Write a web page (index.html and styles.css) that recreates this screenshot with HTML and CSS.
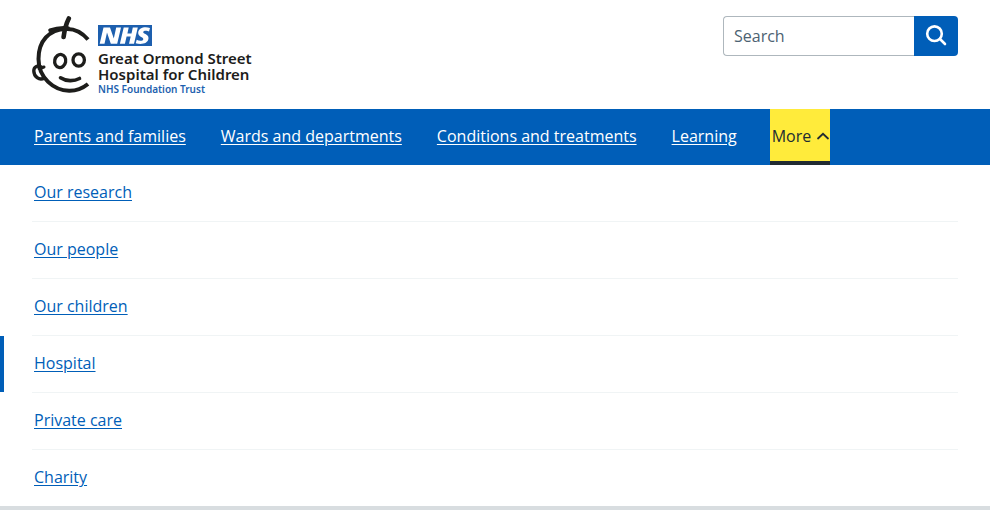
FILE: index.html
```html
<!DOCTYPE html>
<html lang="en">
<head>
<meta charset="utf-8">
<meta name="viewport" content="width=device-width, initial-scale=1">
<title>Great Ormond Street Hospital</title>
<link rel="stylesheet" href="styles.css">
</head>
<body>
<header class="header">
  <a class="logo" href="#">
    <svg class="logo-face" viewBox="0 0 60 78" aria-hidden="true">
      <g fill="none" stroke="#1d1d1b" stroke-linejoin="round">
        <path stroke-width="4" d="M56 23.500C50 16.500 43 12.500 34 13C17 13.500 6.500 25 6.500 43C6.500 62 22 74.500 37 74.800C44 75 51 72 56 68"/>
        <path stroke-width="3.600" stroke-linecap="round" d="M18 14.200C24 12 30 11.300 36 12"/>
        <path stroke-width="4.600" stroke-linecap="round" d="M36.800 2.500C34 8 32.500 14 31.600 21"/>
        <path stroke-width="3.400" stroke-linecap="round" d="M10 51.500C6 48.500 1.700 50.500 1.800 55C2 60.500 7 65 12.500 62"/>
        <path stroke-width="3" stroke-linecap="round" d="M7 52.500L12 51"/>
        <ellipse stroke-width="3.300" cx="28.200" cy="45" rx="5.500" ry="6.600" transform="rotate(12 28.200 45)"/>
        <ellipse stroke-width="3.300" cx="46.700" cy="44" rx="5.700" ry="6.100"/>
        <path stroke-width="3.600" stroke-linecap="round" d="M28.500 61.800C34 65.500 42 65.500 47.500 62.500"/>
      </g>
    </svg>
    <span class="logo-text">
      <svg class="nhs" viewBox="0 0 54 21" role="img" aria-label="NHS">
        <rect width="54" height="21" fill="#1d5fae"/>
        <g fill="#fff">
          <path d="M5.500 2.500H12L15.800 13.500L18.200 2.500H23L19.200 18.800H12.800L9 7.500L6.500 18.800H1.700Z"/>
          <path d="M25.700 2.500H30.700L29.400 8.400H33.500L34.800 2.500H39.800L36 18.800H31L32.700 11.600H28.600L26.900 18.800H21.900Z"/>
          <path d="M52 3L51 6.400C49.500 5.600 45.500 5.200 45.200 7.100C45 9 50.800 9.200 50.500 13.300C50 19.200 42.500 19.800 37.700 18.200L38.700 14.800C41 16 45 16.200 45.300 14.200C45.600 12.200 39.800 12 40.200 7.600C40.700 2.200 47.500 1.200 52 3Z"/>
        </g>
      </svg>
      <span class="logo-name">Great Ormond Street<br>Hospital for Children</span>
      <span class="logo-trust">NHS Foundation Trust</span>
    </span>
  </a>
  <form class="search" role="search">
    <input class="search-input" type="search" placeholder="Search" aria-label="Search">
    <button class="search-button" type="submit" aria-label="Search">
      <svg class="search-icon" viewBox="0 0 24 24" aria-hidden="true" fill="none" stroke="#fff" stroke-width="2.600" stroke-linecap="round"><circle cx="10.500" cy="9.700" r="7.300"/><path d="M16 15L21 20"/></svg>
    </button>
  </form>
</header>
<nav aria-label="Menu">
  <div class="bar">
    <a class="bar-link" href="#">Parents and families</a>
    <a class="bar-link" href="#">Wards and departments</a>
    <a class="bar-link" href="#">Conditions and treatments</a>
    <a class="bar-link" href="#">Learning</a>
    <button class="more" type="button" aria-expanded="true">More<svg class="chevron" viewBox="0 0 14 8" aria-hidden="true"><path d="M2 6.500L7 1.800L12 6.500" fill="none" stroke="#212b32" stroke-width="1.800" stroke-linecap="round"/></svg></button>
  </div>
  <ul class="menu">
    <li class="menu-item"><a class="menu-link" href="#">Our research</a></li>
    <li class="menu-item"><a class="menu-link" href="#">Our people</a></li>
    <li class="menu-item"><a class="menu-link" href="#">Our children</a></li>
    <li class="menu-item current"><a class="menu-link" href="#" aria-current="true">Hospital</a></li>
    <li class="menu-item"><a class="menu-link" href="#">Private care</a></li>
    <li class="menu-item"><a class="menu-link" href="#">Charity</a></li>
  </ul>
</nav>
</body>
</html>
```
FILE: styles.css
```css
* {
  box-sizing: border-box;
}

body {
  margin: 0;
  background: #fff;
  color: #212b32;
  font: 16px/24px "Open Sans", "Noto Sans", sans-serif;
}

.header {
  display: flex;
  justify-content: space-between;
  align-items: flex-start;
  padding: 16px 32px 14px;
}

.logo {
  display: flex;
  gap: 6px;
  text-decoration: none;
}

.logo-face {
  width: 60px;
  height: 78px;
}

.logo-text {
  display: flex;
  flex-direction: column;
  padding-top: 9px;
}

.nhs {
  width: 54px;
  height: 21px;
  margin-bottom: 4px;
}

.logo-name {
  color: #1d1d1b;
  font-family: "Noto Sans", sans-serif;
  font-size: 15px;
  font-weight: 600;
  line-height: 16px;
  white-space: nowrap;
}

.logo-trust {
  padding-top: 1px;
  color: #1d5fae;
  font-family: "Noto Sans", sans-serif;
  font-size: 10px;
  font-weight: 600;
  line-height: 12px;
}

.search {
  display: flex;
  height: 40px;
}

.search-input {
  width: 191px;
  padding: 0 10px;
  border: 1px solid #aeb7bd;
  border-right: 0;
  border-radius: 4px 0 0 4px;
  background: #fff;
  font: inherit;
  appearance: none;
}

.search-input::placeholder {
  color: #4c6272;
  opacity: 1;
}

.search-button {
  display: flex;
  align-items: center;
  justify-content: center;
  width: 44px;
  padding: 0;
  border: 0;
  border-radius: 0 4px 4px 0;
  background: #005eb8;
}

.search-icon {
  width: 24px;
  height: 24px;
}

.bar {
  display: flex;
  gap: 35px;
  height: 56px;
  padding: 0 34px;
  background: #005eb8;
}

.bar-link {
  padding: 15px 0 17px;
  color: #fff;
  white-space: nowrap;
  text-underline-offset: 2px;
}

.more {
  display: flex;
  align-items: center;
  gap: 5px;
  margin-left: -2px;
  padding: 2px 0 0 2px;
  border: 0;
  border-bottom: 4px solid #212b32;
  background: #ffeb3b;
  color: #212b32;
  font: inherit;
}

.chevron {
  width: 14px;
  height: 8px;
}

.menu {
  margin: 0;
  padding: 0;
  border-bottom: 4px solid #d8dde0;
  list-style: none;
}

.menu-item {
  padding: 0 32px;
}

.menu-link {
  display: block;
  padding: 15px 2px 17px;
  color: #005eb8;
  text-underline-offset: 2px;
}

.menu-item + .menu-item .menu-link {
  border-top: 1px solid #f0f4f5;
}

.current {
  background: linear-gradient(#005eb8, #005eb8) left bottom / 4px 56px no-repeat;
}
```
